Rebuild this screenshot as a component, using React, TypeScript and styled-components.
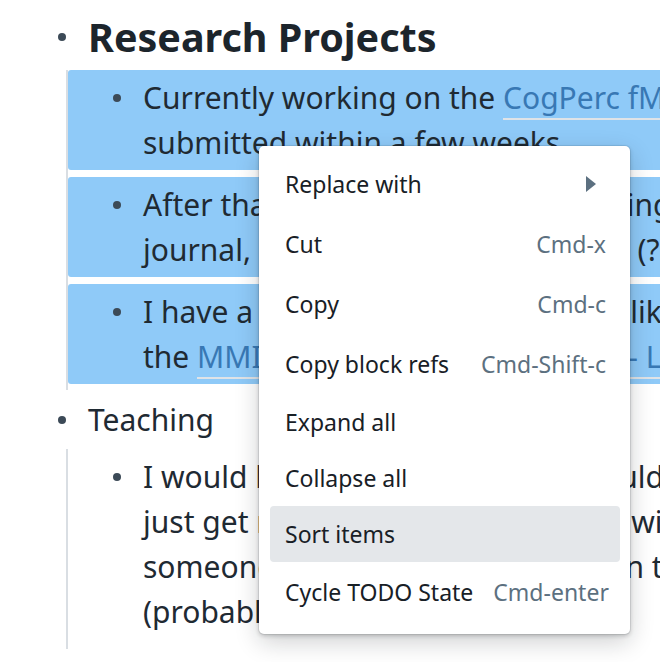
import React from 'react';
import styled, { createGlobalStyle } from 'styled-components';

const GlobalStyle = createGlobalStyle`
  html, body {
    margin: 0;
    padding: 0;
    background: #ffffff;
    overflow: hidden;
  }
`;

const Page = styled.div`
  position: relative;
  width: 660px;
  height: 662px;
  overflow: hidden;
  font-family: "Noto Sans", "Open Sans", sans-serif;
  color: #1f2a33;
`;

const Outline = styled.div`
  padding-left: 50px;
`;

const Row = styled.div<{ $pad: string; $highlight?: boolean; $indent?: number }>`
  display: flex;
  align-items: flex-start;
  padding: ${(p) => p.$pad};
  padding-left: ${(p) => p.$indent || 0}px;
  background: ${(p) => (p.$highlight ? '#8fcaf8' : 'transparent')};
  border-radius: 3px 0 0 3px;
`;

const BulletBox = styled.div<{ $lh: number }>`
  width: 24px;
  height: ${(p) => p.$lh}px;
  margin-right: 14px;
  flex-shrink: 0;
  display: flex;
  align-items: center;
  justify-content: center;
`;

const Dot = styled.span`
  width: 8px;
  height: 8px;
  border-radius: 50%;
  background: #3c4a57;
`;

const Heading = styled.div`
  font-size: 39.5px;
  font-weight: 700;
  line-height: 50px;
  color: #1c252c;
  white-space: nowrap;
`;

const Text = styled.div`
  font-size: 30px;
  line-height: 45px;
  white-space: nowrap;
`;

const Line = styled.div``;

const Link = styled.span`
  color: #3878b4;
  border-bottom: 2px solid #dfe3e7;
`;

const Children = styled.div<{ $bottom: number }>`
  margin-left: 16px;
  border-left: 2px solid #d9dee3;
  display: flex;
  flex-direction: column;
  gap: 7px;
  padding-bottom: ${(p) => p.$bottom}px;
`;

const Menu = styled.div`
  position: absolute;
  left: 259px;
  top: 146px;
  width: 371px;
  box-sizing: border-box;
  padding: 8px 10px 12px 11px;
  background: #ffffff;
  border-radius: 5px;
  box-shadow: 0 0 0 1px rgba(16, 22, 26, 0.08), 0 2px 4px rgba(16, 22, 26, 0.2),
    0 8px 24px rgba(16, 22, 26, 0.2);
  font-family: "Noto Sans", "Open Sans", sans-serif;
  font-size: 23px;
  color: #182026;
`;

const MenuItem = styled.div<{ $active?: boolean; $tall?: boolean }>`
  display: flex;
  align-items: center;
  justify-content: space-between;
  height: ${(p) => (p.$tall ? 60 : 56)}px;
  padding: 0 14px 0 15px;
  border-radius: 4px;
  background: ${(p) => (p.$active ? '#e4e7ea' : 'transparent')};
  white-space: nowrap;
`;

const Shortcut = styled.span`
  color: #5c7080;
  margin-left: 20px;
`;

const Caret = styled.span`
  width: 0;
  height: 0;
  border-top: 8px solid transparent;
  border-bottom: 8px solid transparent;
  border-left: 10px solid #5c7080;
  margin-right: 10px;
`;

type ChildProps = { highlight?: boolean; children: React.ReactNode };

const ChildBlock = ({ highlight, children }: ChildProps) => (
  <Row $pad="5px 0" $indent={37} $highlight={highlight}>
    <BulletBox $lh={45}>
      <Dot />
    </BulletBox>
    <Text>{children}</Text>
  </Row>
);

const menuItems = [
  { label: 'Replace with', caret: true, tall: true },
  { label: 'Cut', shortcut: 'Cmd-x', tall: true },
  { label: 'Copy', shortcut: 'Cmd-c', tall: true },
  { label: 'Copy block refs', shortcut: 'Cmd-Shift-c', tall: true },
  { label: 'Expand all' },
  { label: 'Collapse all' },
  { label: 'Sort items', active: true },
  { label: 'Cycle TODO State', shortcut: 'Cmd-enter', tall: true },
];

export default function App() {
  return (
    <Page>
      <GlobalStyle />
      <Outline>
        <Row $pad="12px 0 8px">
          <BulletBox $lh={50}>
            <Dot />
          </BulletBox>
          <Heading>Research Projects</Heading>
        </Row>
        <Children $bottom={6}>
          <ChildBlock highlight>
            <Line>
              Currently working on the <Link>CogPerc fMRI paper</Link>, which should be
            </Line>
            <Line>submitted within a few weeks.</Line>
          </ChildBlock>
          <ChildBlock highlight>
            <Line>After that, I'll be focusing on finishing the writing</Line>
            <Line>
              journal, perhaps <Link>Neuropsychology</Link> (?)
            </Line>
          </ChildBlock>
          <ChildBlock highlight>
            <Line>I have a few other projects that I'd like to keep</Line>
            <Line>
              the <Link>MMI Reading Group Meetings - Lab Notes</Link>
            </Line>
          </ChildBlock>
        </Children>
        <Row $pad="7px 0">
          <BulletBox $lh={45}>
            <Dot />
          </BulletBox>
          <Text>Teaching</Text>
        </Row>
        <Children $bottom={10}>
          <ChildBlock>
            <Line>I would like to teach a course, I could</Line>
            <Line>just get my TA experience all done with a single course</Line>
            <Line>someone who has taught before, in the</Line>
            <Line>(probably next spring).</Line>
          </ChildBlock>
        </Children>
      </Outline>
      <Menu>
        {menuItems.map((item) => (
          <MenuItem key={item.label} $active={item.active} $tall={item.tall}>
            <span>{item.label}</span>
            {item.caret && <Caret />}
            {item.shortcut && <Shortcut>{item.shortcut}</Shortcut>}
          </MenuItem>
        ))}
      </Menu>
    </Page>
  );
}
